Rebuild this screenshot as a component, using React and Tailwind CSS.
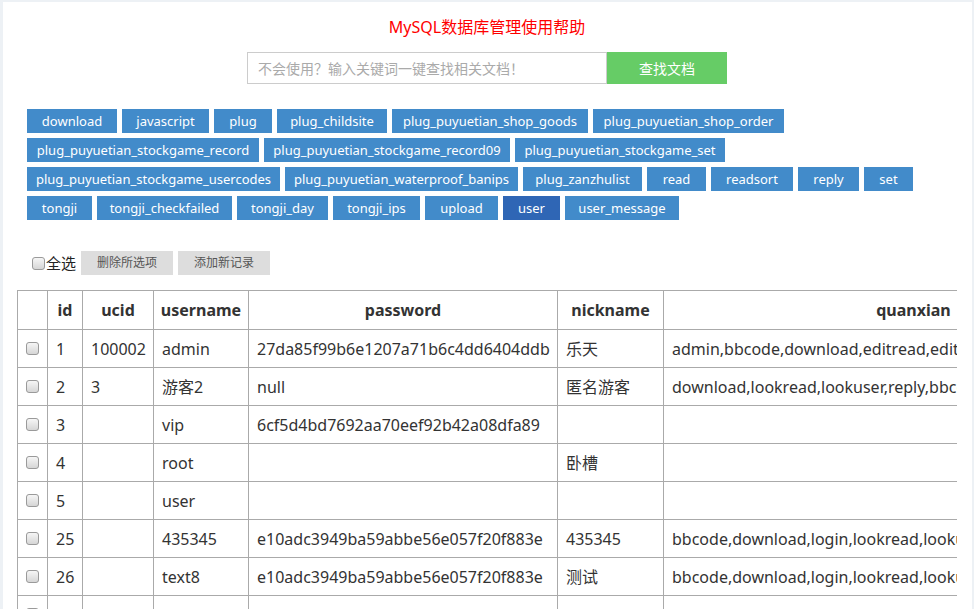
import React from 'react';

const tags = [
    { name: 'download', w: 'w-[90px]' },
    { name: 'javascript', w: 'w-[87px]' },
    { name: 'plug', w: 'w-[58px]' },
    { name: 'plug_childsite', w: 'w-[110px]' },
    { name: 'plug_puyuetian_shop_goods', w: 'w-[196px]' },
    { name: 'plug_puyuetian_shop_order', w: 'w-[191px]' },
    { name: 'plug_puyuetian_stockgame_record', w: 'w-[232px]' },
    { name: 'plug_puyuetian_stockgame_record09', w: 'w-[246px]' },
    { name: 'plug_puyuetian_stockgame_set', w: 'w-[210px]' },
    { name: 'plug_puyuetian_stockgame_usercodes', w: 'w-[253px]' },
    { name: 'plug_puyuetian_waterproof_banips', w: 'w-[233px]' },
    { name: 'plug_zanzhulist', w: 'w-[119px]' },
    { name: 'read', w: 'w-[59px]' },
    { name: 'readsort', w: 'w-[82px]' },
    { name: 'reply', w: 'w-[61px]' },
    { name: 'set', w: 'w-[49px]' },
    { name: 'tongji', w: 'w-[65px]' },
    { name: 'tongji_checkfailed', w: 'w-[135px]' },
    { name: 'tongji_day', w: 'w-[91px]' },
    { name: 'tongji_ips', w: 'w-[87px]' },
    { name: 'upload', w: 'w-[73px]' },
    { name: 'user', w: 'w-[57px]', active: true },
    { name: 'user_message', w: 'w-[114px]' },
];

const hash = 'e10adc3949ba59abbe56e057f20f883e';
const perms = 'bbcode,download,login,lookread,lookuser,reply,upload';

const rows = [
    ['1', '100002', 'admin', '27da85f99b6e1207a71b6c4dd6404ddb', '乐天', 'admin,bbcode,download,editread,editreply,login,lookread'],
    ['2', '3', '游客2', 'null', '匿名游客', 'download,lookread,lookuser,reply,bbcode,login'],
    ['3', '', 'vip', '6cf5d4bd7692aa70eef92b42a08dfa89', '', ''],
    ['4', '', 'root', '', '卧槽', ''],
    ['5', '', 'user', '', '', ''],
    ['25', '', '435345', hash, '435345', perms],
    ['26', '', 'text8', hash, '测试', perms],
    ['27', '', 'text9', hash, '', perms],
];

const Check = () => (
    <input type="checkbox"
        className="appearance-none block w-[13px] h-[13px] rounded-[3px] border border-[#9a9a9a] bg-gradient-to-b from-[#f6f6f6] to-[#d6d6d6]" />
);

const App = () => {
    return (
        <div className="min-h-screen bg-[#edf1f5] pl-[3px] pr-[2px] pt-[2px] text-[#333]"
            style={{ fontFamily: '"Noto Sans", "Noto Sans CJK SC", sans-serif' }}>
            <div className="bg-white min-h-[607px] px-[14px] pr-[15px] pt-[13px]">
                {/* Title + search */}
                <h1 className="text-center text-[16px] leading-[24px] text-[#ff0000] font-normal">MySQL数据库管理使用帮助</h1>
                <div className="flex justify-center mt-[13px]">
                    <input type="text" placeholder="不会使用？输入关键词一键查找相关文档！"
                        className="w-[360px] h-[32px] border border-[#cccccc] px-[10px] text-[14px] outline-none placeholder:text-[#aaaaaa] font-['Noto_Sans_CJK_SC',sans-serif]" />
                    <button className="w-[120px] h-[32px] bg-[#66cc66] text-white text-[14px]">查找文档</button>
                </div>

                {/* Table names */}
                <div className="flex flex-wrap gap-[5px] mt-[25px] px-[10px]">
                    {tags.map(t => (
                        <a key={t.name} href="#"
                            className={`${t.w} ${t.active ? 'bg-[#2f66b5]' : 'bg-[#428bca]'} h-[24px] leading-[24px] text-center text-[13px] text-white whitespace-nowrap`}>
                            {t.name}
                        </a>
                    ))}
                </div>

                {/* Actions */}
                <div className="flex items-center mt-[31px] pl-[15px]">
                    <label className="flex items-center text-[15px] text-[#222]">
                        <Check />
                        <span className="ml-[1px]">全选</span>
                    </label>
                    <button className="ml-[5px] w-[92px] h-[24px] bg-[#dddddd] text-[12px] text-[#555]">删除所选项</button>
                    <button className="ml-[5px] w-[92px] h-[24px] bg-[#dddddd] text-[12px] text-[#555]">添加新记录</button>
                </div>

                {/* Data table */}
                <div className="mt-[15px] overflow-hidden">
                    <table className="table-fixed border-collapse w-[1146px] text-[16px]">
                        <colgroup>
                            <col className="w-[30px]" />
                            <col className="w-[35px]" />
                            <col className="w-[71px]" />
                            <col className="w-[95px]" />
                            <col className="w-[309px]" />
                            <col className="w-[106px]" />
                            <col className="w-[500px]" />
                        </colgroup>
                        <thead>
                            <tr className="h-[39px]">
                                <th className="border border-[#aaaaaa]"></th>
                                {['id', 'ucid', 'username', 'password', 'nickname', 'quanxian'].map(h => (
                                    <th key={h} className="border border-[#aaaaaa] font-bold text-center whitespace-nowrap overflow-hidden">{h}</th>
                                ))}
                            </tr>
                        </thead>
                        <tbody>
                            {rows.map(r => (
                                <tr key={r[0]} className="h-[38px]">
                                    <td className="border border-[#aaaaaa]">
                                        <div className="flex justify-center"><Check /></div>
                                    </td>
                                    {r.map((c, i) => (
                                        <td key={i} className="border border-[#aaaaaa] px-[8px] whitespace-nowrap overflow-hidden">{c}</td>
                                    ))}
                                </tr>
                            ))}
                        </tbody>
                    </table>
                </div>
            </div>
        </div>
    );
};

export default App;
